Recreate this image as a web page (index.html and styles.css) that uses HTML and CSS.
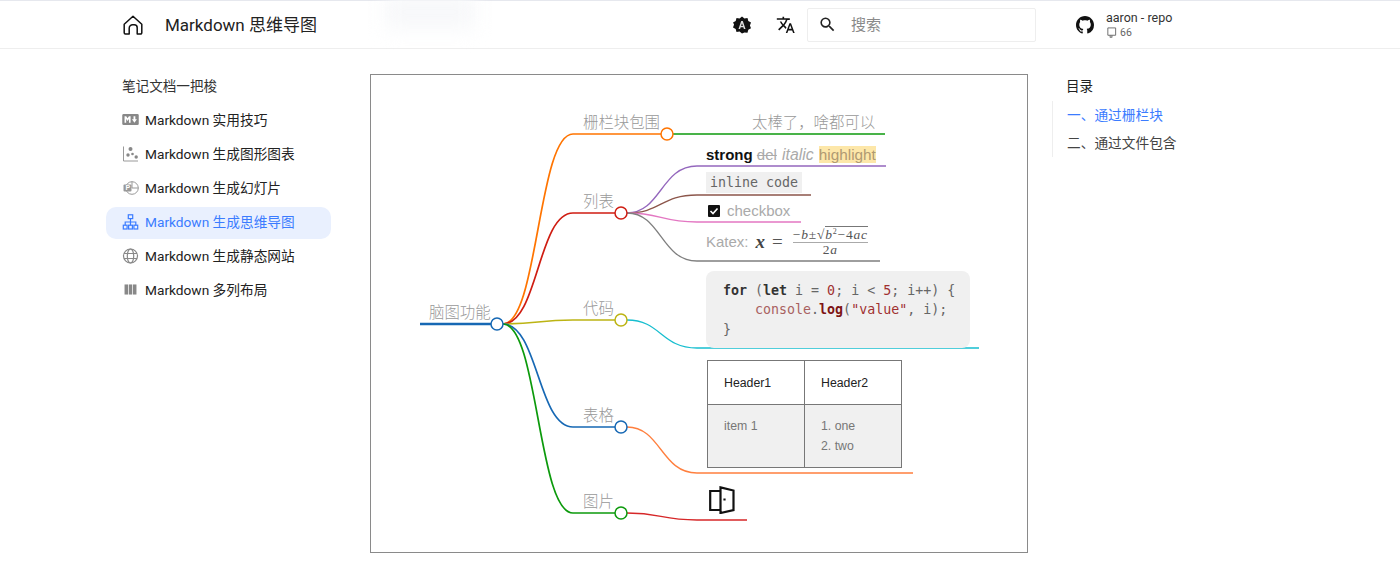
FILE: index.html
```html
<!DOCTYPE html>
<html lang="zh">
<head>
<meta charset="utf-8">
<title>Markdown 思维导图</title>
<link rel="stylesheet" href="styles.css">
</head>
<body>
<header class="topbar">
  <div class="smudge"></div>
  <a class="home"><svg class="home-icon" viewBox="0 0 20 20" fill="none" stroke="#111" stroke-width="1.500" stroke-linejoin="round" stroke-linecap="round"><path d="M1.200 9.200 10 1.200l8.800 8v8.600a1.200 1.200 0 0 1-1.200 1.200h-3.400v-6.200a3 3 0 0 0-3-3H9.600a3.400 3.400 0 0 0-3.400 3.400V19H2.400a1.200 1.200 0 0 1-1.200-1.200z"/></svg></a>
  <span class="title">Markdown 思维导图</span>
  <div class="tools">
    <svg class="tool-theme" viewBox="0 0 20 20"><path fill="#111" d="M10 .6l2.700 2.100 3.400-.4.900 3.300 3 1.700-1.200 3.200 1.200 3.200-3 1.700-.9 3.300-3.400-.4L10 19.400l-2.700-2.100-3.400.4-.9-3.300-3-1.700 1.200-3.200L0 7.300l3-1.700.9-3.300 3.400.4z"/><path fill="#ddd" d="M9.100 5.500h1.800l3 9h-1.800l-.6-2h-3l-.6 2H6.100zm.9 2.500-1 3h2z"/></svg>
    <svg class="tool-lang" viewBox="0 0 24 24" fill="#111"><path d="m12.870 15.070-2.540-2.510.03-.03c1.740-1.940 2.980-4.170 3.710-6.530H17V4h-7V2H8v2H1v1.990h11.170C11.500 7.920 10.440 9.750 9 11.350 8.070 10.320 7.300 9.190 6.690 8h-2c.73 1.630 1.730 3.170 2.980 4.560l-5.090 5.020L4 19l5-5 3.110 3.110zM18.500 10h-2L12 22h2l1.120-3h4.750L21 22h2zm-2.620 7 1.620-4.330L19.120 17z"/></svg>
  </div>
  <div class="search">
    <svg class="search-icon" viewBox="0 0 24 24" fill="#222"><path d="M15.500 14h-.79l-.28-.27A6.470 6.470 0 0 0 16 9.500 6.500 6.500 0 1 0 9.500 16c1.610 0 3.090-.59 4.230-1.570l.27.28v.79l5 4.990L20.490 19zm-6 0C7.010 14 5 11.990 5 9.500S7.010 5 9.500 5 14 7.010 14 9.500 11.990 14 9.500 14"/></svg>
    <span class="search-text">搜索</span>
  </div>
  <div class="repo">
    <svg class="gh" viewBox="0 0 16 16" fill="#111"><path d="M8 0C3.580 0 0 3.580 0 8c0 3.540 2.290 6.530 5.470 7.590.4.070.55-.17.55-.38 0-.19-.01-.82-.01-1.490-2.010.37-2.530-.49-2.690-.94-.09-.23-.48-.94-.82-1.130-.28-.15-.68-.52-.01-.53.630-.01 1.080.58 1.230.82.720 1.210 1.870.87 2.330.66.070-.52.280-.87.510-1.070-1.780-.2-3.640-.89-3.640-3.950 0-.87.310-1.590.82-2.150-.08-.2-.36-1.020.08-2.120 0 0 .67-.21 2.200.82.640-.18 1.320-.27 2-.27s1.360.09 2 .27c1.530-1.040 2.200-.82 2.200-.82.44 1.100.16 1.920.08 2.120.51.560.82 1.270.82 2.150 0 3.070-1.870 3.750-3.650 3.950.29.250.54.730.54 1.480 0 1.070-.01 1.930-.01 2.200 0 .21.150.46.550.38A8.010 8.010 0 0 0 16 8c0-4.420-3.580-8-8-8"/></svg>
    <div class="repo-meta">
      <div class="repo-name">aaron - repo</div>
      <div class="repo-stars"><svg class="book" viewBox="0 0 12 12" fill="none" stroke="#666" stroke-width="1"><path d="M2 1h8.500v8H2zM4.500 9v2.500l1-.8 1 .8V9"/></svg><span>66</span></div>
    </div>
  </div>
</header>

<div class="layout">
  <nav class="sidebar">
    <div class="side-head">笔记文档一把梭</div>
    <a class="side-item"><svg class="side-icon" viewBox="0 0 18 12"><rect width="18" height="12" rx="1.500" fill="#888"/><path d="M2.500 9.500v-7h1.800l1.500 2.200 1.500-2.200h1.800v7H7.300V5.400L5.800 7.500 4.300 5.400v4.100zM12.300 2.500h2v3.300h1.700l-2.700 3.700-2.700-3.700h1.700z" fill="#fff"/></svg><span>Markdown 实用技巧</span></a>
    <a class="side-item"><svg class="side-icon tall" viewBox="0 0 16 16"><path d="M1 .5v14.500h14.500" fill="none" stroke="#999" stroke-width="1"/><circle cx="8" cy="3" r="2" fill="#888"/><circle cx="5.500" cy="9" r="1.700" fill="#888"/><circle cx="10" cy="8" r="1.300" fill="#888"/><circle cx="13.700" cy="11" r="1.700" fill="#888"/></svg><span>Markdown 生成图形图表</span></a>
    <a class="side-item"><svg class="side-icon tall" viewBox="0 0 16 16"><circle cx="9.500" cy="8" r="6.300" fill="none" stroke="#999"/><path d="M9.500 1.700V8h6.300" fill="none" stroke="#999"/><rect x="1" y="4.500" width="8" height="7" rx="1" fill="#999"/><text class="ppt-letter" x="3" y="10.300">P</text></svg><span>Markdown 生成幻灯片</span></a>
    <a class="side-item active"><svg class="side-icon tall" viewBox="0 0 16 16" fill="none" stroke="#3b7cff" stroke-width="1.200"><rect x="5.800" y=".8" width="4.400" height="3.800"/><rect x=".8" y="11.200" width="3.800" height="3.800"/><rect x="6.100" y="11.200" width="3.800" height="3.800"/><rect x="11.400" y="11.200" width="3.800" height="3.800"/><path d="M8 4.600v6.600M2.700 11.200V8h10.600v3.200"/></svg><span>Markdown 生成思维导图</span></a>
    <a class="side-item"><svg class="side-icon tall" viewBox="0 0 16 16" fill="none" stroke="#888" stroke-width="1.200"><circle cx="8" cy="8" r="7"/><ellipse cx="8" cy="8" rx="3.200" ry="7"/><path d="M1.500 5.500h13M1.500 10.500h13"/></svg><span>Markdown 生成静态网站</span></a>
    <a class="side-item"><svg class="side-icon" viewBox="0 0 16 12" fill="#888"><rect x="1.500" y=".5" width="3.800" height="11"/><rect x="6.100" y=".5" width="3.800" height="11"/><rect x="10.700" y=".5" width="3.800" height="11"/></svg><span>Markdown 多列布局</span></a>
  </nav>

  <main class="content">
    <div class="mindmap">
      <svg class="links" viewBox="371 75 656 477" fill="none">
        <path class="l-root" d="M420 324H491"/>
        <path class="l l-orange" d="M503 324C538 324 538 134 573 134H661"/>
        <path class="l l-red" d="M503 324C538 324 538 213 573 213H615"/>
        <path class="l l-olive" d="M503 324C538 324 538 320 573 320H615"/>
        <path class="l l-blue" d="M503 324C538 324 538 427 573 427H615"/>
        <path class="l l-green" d="M503 324C538 324 538 513 573 513H615"/>
        <path class="m l-green" d="M673 134H885"/>
        <path class="m l-purple" d="M627 213C661 213 661 166 697 166H886"/>
        <path class="m l-brown" d="M627 213C661 213 661 195 697 195H811"/>
        <path class="m l-pink" d="M627 213C661 213 661 222 697 222H801"/>
        <path class="m l-gray" d="M627 213C661 213 661 261 697 261H880"/>
        <path class="m l-cyan" d="M627 320C661 320 661 348 697 348H979"/>
        <path class="m l-coral" d="M627 427C661 427 661 473 697 473H913"/>
        <path class="m l-crimson" d="M627 513C661 513 661 520 697 520H747"/>
        <circle class="n l-blue" cx="497" cy="324" r="6"/>
        <circle class="n l-orange" cx="667" cy="134" r="6"/>
        <circle class="n l-red" cx="621" cy="213" r="6"/>
        <circle class="n l-olive" cx="621" cy="320" r="6"/>
        <circle class="n l-blue" cx="621" cy="427" r="6"/>
        <circle class="n l-green" cx="621" cy="513" r="6"/>
      </svg>
      <span class="node t-root">脑图功能</span>
      <span class="node t-fence">栅栏块包围</span>
      <span class="node t-list">列表</span>
      <span class="node t-code">代码</span>
      <span class="node t-table">表格</span>
      <span class="node t-image">图片</span>
      <span class="node t-great">太棒了，啥都可以</span>
      <span class="node t-marks"><strong>strong</strong> <del>del</del> <em>italic</em> <mark>highlight</mark></span>
      <code class="node t-inline">inline code</code>
      <span class="node t-check"><svg class="check" viewBox="0 0 12 12"><rect width="12" height="12" rx="1" fill="#111"/><path d="M2.500 6l2.500 2.500 4.500-5" fill="none" stroke="#fff" stroke-width="1.600"/></svg>checkbox</span>
      <span class="node t-katex">Katex: <span class="math"><i class="var">x</i><span class="eq">=</span><span class="frac"><span class="num">−<i>b</i>±√<span class="over"><i>b</i><sup>2</sup>−4<i>ac</i></span></span><span class="den">2<i>a</i></span></span></span></span>
      <div class="node t-block">
        <div class="code-line"><b>for</b> (<b>let</b> i = <u>0</u>; i &lt; <u>5</u>; i++) {</div>
        <div class="code-line indent"><s>console</s>.<b class="fn">log</b>(<u>"value"</u>, i);</div>
        <div class="code-line">}</div>
      </div>
      <table class="node t-grid">
        <thead><tr><th>Header1</th><th>Header2</th></tr></thead>
        <tbody><tr><td>item 1</td><td><div>1. one</div><div>2. two</div></td></tr></tbody>
      </table>
      <svg class="node t-door" viewBox="0 0 26 28" fill="none" stroke="#111" stroke-width="2.200"><path d="M11 5H1.200v19H11"/><path d="M11.500 1.400 24.500 4.500v19.500l-13 3z"/><path d="M15.500 12.500v2"/></svg>
    </div>
  </main>

  <aside class="toc">
    <div class="toc-head">目录</div>
    <div class="toc-list">
      <a class="toc-item current">一、通过栅栏块</a>
      <a class="toc-item">二、通过文件包含</a>
    </div>
  </aside>
</div>
</body>
</html>
```
FILE: styles.css
```css
* { box-sizing: border-box; }
html, body { margin: 0; padding: 0; }
body {
  background: #fff;
  color: #1f1f1f;
  font-family: Roboto, "Noto Sans CJK SC", sans-serif;
  overflow: hidden;
  height: 583px;
}
.topbar {
  position: relative;
  display: flex;
  align-items: center;
  height: 49px;
  padding-left: 123px;
  border-top: 1px solid #e6e8ee;
  border-bottom: 1px solid #eeeeee;
}
.smudge {
  position: absolute;
  left: 385px;
  top: -6px;
  width: 90px;
  height: 34px;
  background: #f7f8fa;
  filter: blur(10px);
}
.home { display: flex; width: 42px; }
.home-icon { width: 20px; height: 20px; }
.title { width: 550px; padding-bottom: 2px; font-size: 17px; color: #222; position: relative; }
.tools { display: flex; align-items: center; width: 94px; padding-left: 20px; margin-left: -2px; }
.tool-theme { width: 18px; height: 18px; flex: none; }
.tool-lang { width: 19.500px; height: 19.500px; margin-left: 25px; flex: none; }
.search {
  display: flex;
  align-items: center;
  width: 229px;
  height: 34px;
  padding-left: 10px;
  border: 1px solid #eeeeee;
  border-radius: 2px;
}
.search-icon { width: 19px; height: 19px; }
.search-text { margin-left: 14px; padding-bottom: 2px; font-size: 15px; color: #8a8a8a; }
.repo { display: flex; align-items: center; margin-left: 40px; }
.gh { width: 18px; height: 18px; }
.repo-meta { margin-left: 12px; }
.repo-name { font-size: 12.500px; line-height: 16px; color: #333; }
.repo-stars { display: flex; align-items: center; font-size: 10.500px; line-height: 14px; color: #666; }
.book { width: 11px; height: 11px; margin-right: 3px; }

.layout { display: flex; }
.sidebar { width: 225px; margin-left: 106px; padding-top: 24px; }
.side-head { padding-left: 16px; font-size: 13.600px; line-height: 27px; color: #333; margin-bottom: 5px; }
.side-item {
  display: flex;
  align-items: center;
  height: 32px;
  margin-bottom: 2px;
  padding: 0 0 4px 16px;
  border-radius: 10px;
  font-size: 13.700px;
  color: #222;
}
.side-item.active { background: #e9f0fe; color: #3b7cff; }
.side-icon { width: 17px; height: 11px; margin-right: 6px; flex: none; }
.side-icon.tall { height: 16px; margin-top: 2px; }
.ppt-letter { font: bold 7px "Liberation Sans", sans-serif; fill: #fff; }

.content { margin-left: 39px; padding-top: 25px; }
.mindmap {
  position: relative;
  width: 658px;
  height: 479px;
  border: 1px solid #8a8a8a;
  font-family: "Liberation Sans", "Noto Sans CJK SC", sans-serif;
}
.links { position: absolute; left: 0; top: 0; width: 656px; height: 477px; }
.l { stroke-width: 1.700; }
.m { stroke-width: 1.300; }
.l-root { stroke: #1668b4; stroke-width: 2.500; }
.n { fill: #fff; stroke-width: 1.500; }
.l-orange { stroke: #ff7400; }
.l-red { stroke: #cf1d12; }
.l-olive { stroke: #bcb414; }
.l-blue { stroke: #1668b4; }
.l-green { stroke: #0c9a0c; }
.l-purple { stroke: #9467bd; }
.l-brown { stroke: #8c564b; }
.l-pink { stroke: #e377c2; }
.l-gray { stroke: #7f7f7f; }
.l-cyan { stroke: #17becf; }
.l-coral { stroke: #ff7f3e; }
.l-crimson { stroke: #d62728; }

.node { position: absolute; white-space: nowrap; }
.t-root, .t-fence, .t-list, .t-code, .t-table, .t-image, .t-great {
  font-size: 15.400px;
  font-weight: 300;
  line-height: 20px;
  color: #999999;
}
.t-root { left: 58px; top: 228px; }
.t-fence { left: 212px; top: 38px; }
.t-list { left: 212px; top: 117px; }
.t-code { left: 212px; top: 224px; }
.t-table { left: 212px; top: 331px; }
.t-image { left: 212px; top: 417px; }
.t-great { left: 381px; top: 38px; }
.t-marks { left: 335px; top: 70px; font-size: 15px; line-height: 20px; color: #aaaaaa; }
.t-marks strong { color: #111; font-weight: bold; }
.t-marks em { font-style: italic; font-size: 15.800px; margin-left: 1px; }
.t-marks mark { background: #fde7a9; color: #b09a72; font-size: 15.300px; margin-left: 1px; }
.t-inline {
  left: 335px;
  top: 97px;
  padding: 0 4px;
  background: #f0f0f0;
  font: 13.300px/21px "DejaVu Sans Mono", monospace;
  color: #666;
}
.t-check { left: 337px; top: 126px; display: flex; align-items: center; font-size: 15px; line-height: 20px; color: #aaaaaa; }
.check { width: 12px; height: 12px; margin-right: 7px; }
.t-katex { left: 335px; top: 150px; display: flex; align-items: center; font-size: 15px; line-height: 34px; color: #aaaaaa; }
.math { display: flex; align-items: center; margin-left: 7px; font-family: "Liberation Serif", serif; color: #555; }
.var { font-size: 19px; font-weight: bold; color: #444; }
.eq { margin-left: 7px; font-size: 19px; color: #555; }
.frac { display: flex; flex-direction: column; align-items: center; margin-left: 10px; font-size: 13.500px; line-height: 13px; letter-spacing: .8px; color: #555; }
.num { border-bottom: 1px solid #aaa; padding-bottom: 1px; }
.over { border-top: 1px solid #777; }
.num sup { font-size: 8px; line-height: 0; }
.t-block {
  left: 335px;
  top: 196px;
  width: 264px;
  height: 77px;
  padding: 9.500px 17px;
  background: #f0f0f0;
  border-radius: 8px;
  font: 13.300px/19.500px "DejaVu Sans Mono", monospace;
  color: #666;
}
.code-line { white-space: pre; }
.code-line.indent { padding-left: 4ch; }
.t-block b { color: #333; }
.t-block b.fn { color: #7d1414; }
.t-block u { color: #a03030; text-decoration: none; }
.t-block s { color: #a86060; text-decoration: none; }
.t-grid {
  left: 336px;
  top: 285px;
  width: 195px;
  height: 108px;
  border-collapse: collapse;
  font-size: 12.300px;
}
.t-grid th, .t-grid td { width: 50%; border: 1px solid #777; padding: 0 16px; text-align: left; }
.t-grid th { height: 44px; font-weight: 400; color: #222; }
.t-grid td { height: 63px; padding-top: 11px; background: #f0f0f0; color: #777; vertical-align: top; line-height: 20px; }
.t-door { left: 338px; top: 411px; width: 26px; height: 28px; }

.toc { margin-left: 24px; padding-top: 24px; width: 200px; }
.toc-head { padding-left: 14px; font-size: 13.500px; line-height: 27px; color: #222; margin-bottom: 1px; }
.toc-list { border-left: 1px solid #eeeeee; }
.toc-item { display: block; padding-left: 14px; font-size: 13.700px; line-height: 28px; color: #444; }
.toc-item.current { color: #3b7cff; }
```
